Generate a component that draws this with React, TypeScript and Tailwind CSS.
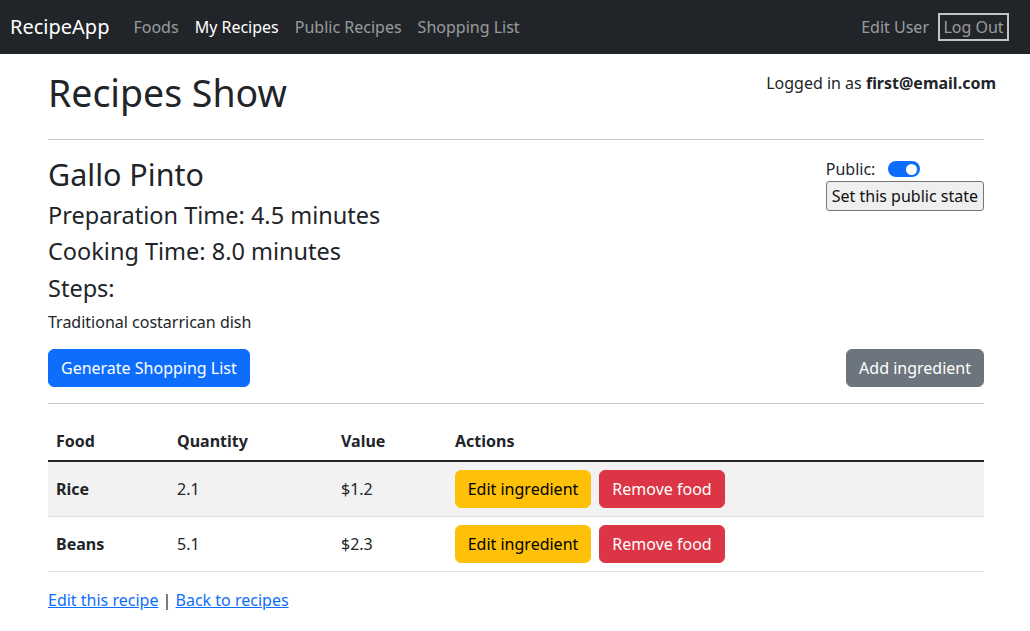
import React from "react";

export default function App() {
  const rows = [
    { food: "Rice", qty: "2.1", value: "$1.2", striped: true },
    { food: "Beans", qty: "5.1", value: "$2.3", striped: false },
  ];
  return (
    <div className="min-h-[631px] bg-white text-[#212529] font-['Noto_Sans',sans-serif] text-base leading-6">
      <nav className="h-[54px] bg-[#212529] flex items-center justify-between pl-[10px] pr-[21px]">
        <div className="flex items-center">
          <span className="text-[20px] leading-[30px] text-white mr-4">RecipeApp</span>
          <a className="px-2 text-[rgba(255,255,255,0.55)]">Foods</a>
          <a className="px-2 text-white">My Recipes</a>
          <a className="px-2 text-[rgba(255,255,255,0.55)]">Public Recipes</a>
          <a className="px-2 text-[rgba(255,255,255,0.55)]">Shopping List</a>
        </div>
        <div className="flex items-center">
          <a className="px-2 text-[rgba(255,255,255,0.55)]">Edit User</a>
          <button className="ml-[1px] w-[71px] h-[28px] border-2 border-[#c4c4c4] text-[rgba(255,255,255,0.55)] leading-6 text-center">
            Log Out
          </button>
        </div>
      </nav>

      <div className="w-[960px] ml-[36px] px-3">
        <div className="flex justify-between items-start pt-[16px]">
          <h1 className="text-[37.45px] leading-[45px] font-normal mb-2">Recipes Show</h1>
          <p className="mt-[1px] -mr-[12px]">
            Logged in as <strong className="font-bold">first@email.com</strong>
          </p>
        </div>
        <hr className="mt-4 mb-4 border-t border-[#c8c9ca]" />

        <div className="flex justify-between items-start">
          <div>
            <h2 className="text-[30.47px] leading-[36.6px] font-normal mb-2">Gallo Pinto</h2>
            <h4 className="text-[23.5px] leading-[28.2px] font-normal mb-2">Preparation Time: 4.5 minutes</h4>
            <h4 className="text-[23.5px] leading-[28.2px] font-normal mb-[9px]">Cooking Time: 8.0 minutes</h4>
            <h4 className="text-[23.5px] leading-[28.2px] font-normal mb-[8px]">Steps:</h4>
            <p className="mb-[15px]">Traditional costarrican dish</p>
          </div>
          <div className="pt-[1px]">
            <div className="flex items-center h-[24px]">
              <span>Public:</span>
              <span className="ml-[13px] w-8 h-4 rounded-full bg-[#0d6efd] flex items-center justify-end pr-[3px]">
                <span className="w-[11px] h-[11px] rounded-full bg-white"></span>
              </span>
            </div>
            <button className="h-[30px] px-[5px] bg-[#efefef] border border-[#767676] rounded-[3px] text-[#111] leading-6">
              Set this public state
            </button>
          </div>
        </div>

        <div className="flex justify-between">
          <button className="h-[38px] px-3 bg-[#0d6efd] border border-[#0d6efd] text-white rounded-md">
            Generate Shopping List
          </button>
          <button className="h-[38px] px-3 bg-[#6c757d] border border-[#6c757d] text-white rounded-md">
            Add ingredient
          </button>
        </div>
        <hr className="mt-4 mb-4 border-t border-[#c8c9ca]" />

        <table className="w-full border-collapse mb-4">
          <thead>
            <tr className="border-b-2 border-[#212529]">
              <th className="w-[121px] text-left font-bold px-2 pt-[9px] pb-[7px]">Food</th>
              <th className="w-[164px] text-left font-bold px-2 pt-[9px] pb-[7px]">Quantity</th>
              <th className="w-[114px] text-left font-bold px-2 pt-[9px] pb-[7px]">Value</th>
              <th className="text-left font-bold px-2 pt-[9px] pb-[7px]">Actions</th>
            </tr>
          </thead>
          <tbody>
            {rows.map((r) => (
              <tr key={r.food} className={`border-b border-[#dee2e6] ${r.striped ? "bg-[#f2f2f2]" : "bg-white"}`}>
                <td className="px-2 py-2 font-bold">{r.food}</td>
                <td className="px-2 py-2">{r.qty}</td>
                <td className="px-2 py-2">{r.value}</td>
                <td className="px-2 py-2">
                  <div className="flex gap-2">
                    <button className="w-[136px] h-[38px] bg-[#ffc107] border border-[#ffc107] text-black rounded-md text-center">
                      Edit ingredient
                    </button>
                    <button className="w-[126px] h-[38px] bg-[#dc3545] border border-[#dc3545] text-white rounded-md text-center">
                      Remove food
                    </button>
                  </div>
                </td>
              </tr>
            ))}
          </tbody>
        </table>

        <p>
          <a className="text-[#0d6efd] underline">Edit this recipe</a> |{" "}
          <a className="text-[#0d6efd] underline">Back to recipes</a>
        </p>
      </div>
    </div>
  );
}
